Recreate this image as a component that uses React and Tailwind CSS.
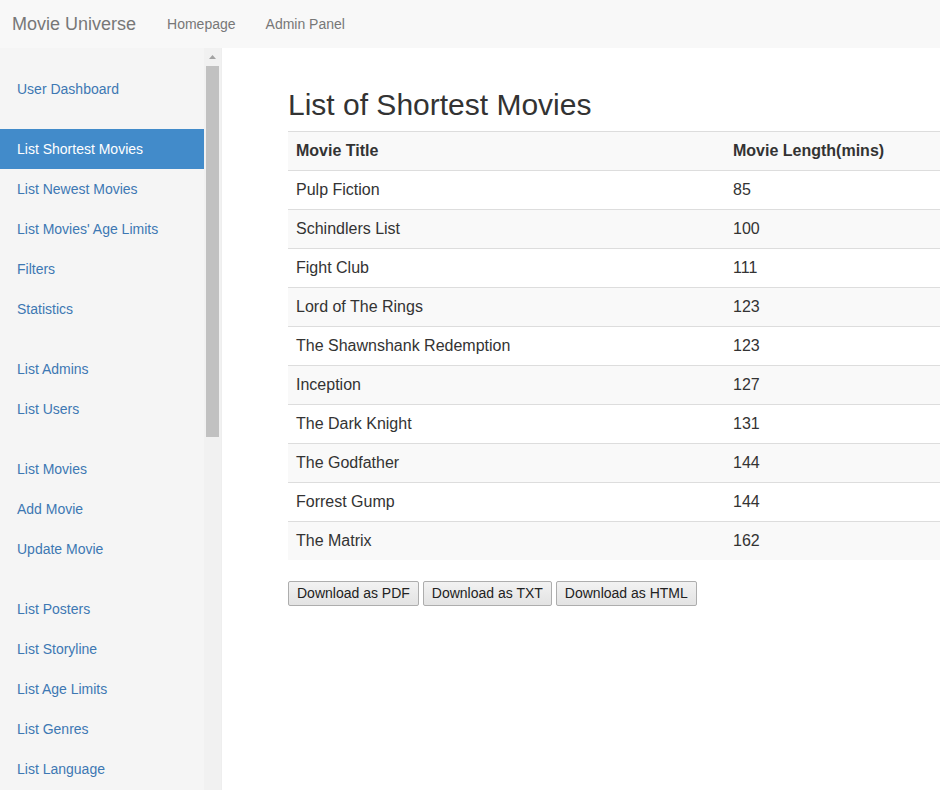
import React from "react";

const groups = [
  ["User Dashboard"],
  ["List Shortest Movies", "List Newest Movies", "List Movies' Age Limits", "Filters", "Statistics"],
  ["List Admins", "List Users"],
  ["List Movies", "Add Movie", "Update Movie"],
  ["List Posters", "List Storyline", "List Age Limits", "List Genres", "List Language"],
];

const rows = [
  ["Pulp Fiction", "85"],
  ["Schindlers List", "100"],
  ["Fight Club", "111"],
  ["Lord of The Rings", "123"],
  ["The Shawnshank Redemption", "123"],
  ["Inception", "127"],
  ["The Dark Knight", "131"],
  ["The Godfather", "144"],
  ["Forrest Gump", "144"],
  ["The Matrix", "162"],
];

export default function App() {
  return (
    <div
      className="h-[790px] w-[940px] overflow-hidden bg-white flex flex-col text-[#333]"
      style={{ fontFamily: '"Liberation Sans", Arial, sans-serif' }}
    >
      <div className="h-[48px] shrink-0 bg-[#f8f8f8] flex items-center text-[#777]">
        <span className="ml-[12px] text-[18px]">Movie Universe</span>
        <span className="ml-[31px] text-[14px]">Homepage</span>
        <span className="ml-[30px] text-[14px]">Admin Panel</span>
      </div>
      <div className="flex flex-1 min-h-0">
        <div className="flex shrink-0 bg-[#f5f5f5] border-r border-[#eeeeee]">
          <div className="w-[204px] pt-[21px] flex flex-col">
            {groups.map((g, gi) => (
              <ul key={gi} className="mb-[20px]">
                {g.map((item) => {
                  const active = item === "List Shortest Movies";
                  return (
                    <li
                      key={item}
                      className={
                        "h-[40px] pl-[17px] flex items-center text-[14px] " +
                        (active ? "bg-[#428bca] text-white" : "text-[#3d78b3]")
                      }
                    >
                      {item}
                    </li>
                  );
                })}
              </ul>
            ))}
          </div>
          <div className="w-[17px] bg-[#f1f1f1] flex flex-col items-center">
            <div className="h-[18px] flex items-center justify-center">
              <svg width="7" height="4" viewBox="0 0 7 4">
                <polygon points="3.5,0 7,4 0,4" fill="#a3a3a3" />
              </svg>
            </div>
            <div className="w-[13px] h-[371px] bg-[#c1c1c1]" />
          </div>
        </div>
        <div className="flex-1 min-w-0 overflow-hidden pl-[66px] pt-[40px]">
          <h2 className="text-[30px] leading-[33px] font-medium mb-[10px] whitespace-nowrap">
            List of Shortest Movies
          </h2>
          <div className="w-[900px] text-[16px]">
            <div className="flex h-[39px] items-center border-t border-[#dddddd] bg-[#f9f9f9] font-bold">
              <div className="w-[437px] pl-[8px]">Movie Title</div>
              <div className="pl-[8px]">Movie Length(mins)</div>
            </div>
            {rows.map(([t, l], i) => (
              <div
                key={t}
                className={
                  "flex h-[39px] items-center border-t border-[#dddddd] " +
                  (i % 2 === 1 ? "bg-[#f9f9f9]" : "bg-white")
                }
              >
                <div className="w-[437px] pl-[8px]">{t}</div>
                <div className="pl-[8px]">{l}</div>
              </div>
            ))}
          </div>
          <div className="mt-[21px] flex gap-[4px]">
            {["Download as PDF", "Download as TXT", "Download as HTML"].map((b) => (
              <button
                key={b}
                className="h-[25px] px-[8px] text-[14px] text-[#222] border border-[#adadad] rounded-[2px] bg-gradient-to-b from-[#f2f2f2] to-[#e3e3e3]"
              >
                {b}
              </button>
            ))}
          </div>
        </div>
      </div>
    </div>
  );
}
